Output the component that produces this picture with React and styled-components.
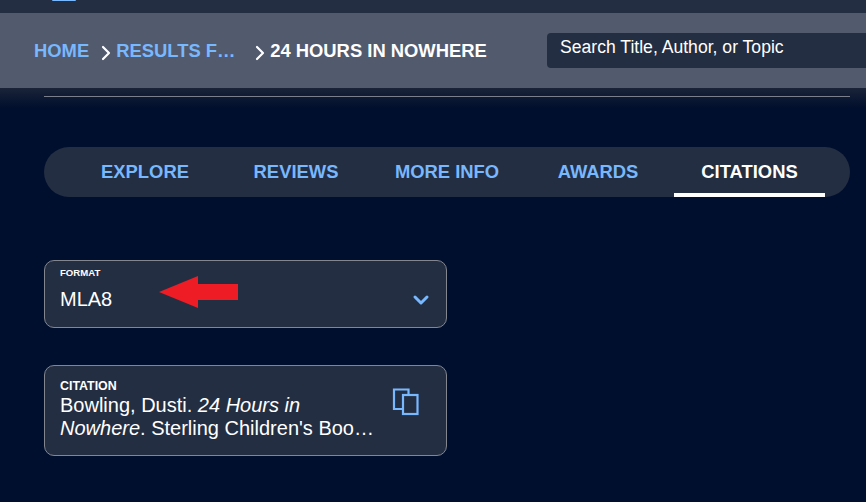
import React from 'react';
import styled, { createGlobalStyle } from 'styled-components';
import { ChevronDown, ChevronRight } from 'lucide-react';

const GlobalStyle = createGlobalStyle`
  html, body {
    margin: 0;
    padding: 0;
    background: #000f2e;
    font-family: "Liberation Sans", Arial, sans-serif;
    overflow: hidden;
  }
`;

const Page = styled.div`
  width: 866px;
  height: 502px;
  overflow: hidden;
  display: flex;
  flex-direction: column;
`;

const TopStrip = styled.div`
  height: 13px;
  background: #242e42;
  padding-left: 52px;
`;

const LogoEdge = styled.div`
  width: 24px;
  height: 1px;
  background: #78b8ff;
  border-radius: 0 0 4px 4px;
`;

const BreadcrumbBar = styled.div`
  height: 75px;
  background: #525a6e;
  display: flex;
  align-items: flex-start;
  padding-left: 34px;
`;

const Trail = styled.nav`
  width: 513px;
  flex: none;
  display: flex;
  align-items: center;
  height: 24px;
  margin-top: 26px;
  font-size: 18.4px;
  font-weight: 700;
`;

const Crumb = styled.span`
  color: ${(p) => (p.$current ? '#ffffff' : '#78b8ff')};
  width: ${(p) => p.$width || 'auto'};
  white-space: nowrap;
  flex: none;
`;

const Separator = styled(ChevronRight)`
  flex: none;
  color: #fff;
  width: 24px;
  height: 24px;
  margin: ${(p) => p.$margin};
`;

const Search = styled.div`
  flex: 1;
  height: 35px;
  margin-top: 20px;
  background: #242e42;
  border-radius: 4px 0 0 4px;
  color: #fff;
  font-size: 17.6px;
  line-height: 20px;
  padding: 4px 0 0 13px;
  box-sizing: border-box;
`;

const Shade = styled.div`
  height: 20px;
  background: linear-gradient(#1a2338, #000f2e);
  padding: 8px 16px 0 44px;
  box-sizing: border-box;
`;

const Rule = styled.div`
  height: 1px;
  background: #7b7f8b;
`;

const Content = styled.main`
  padding: 39px 16px 0 44px;
  display: flex;
  flex-direction: column;
`;

const Tabs = styled.div`
  height: 50px;
  background: #242e42;
  border-radius: 25px;
  padding: 0 24px 0 26px;
  display: flex;
`;

const Tab = styled.div`
  width: 151px;
  box-sizing: border-box;
  text-align: center;
  font-size: 18.4px;
  font-weight: 700;
  line-height: 50px;
  padding-right: ${(p) => (p.$active ? '0' : '1px')};
  color: ${(p) => (p.$active ? '#ffffff' : '#78b8ff')};
  border-bottom: 4px solid ${(p) => (p.$active ? '#ffffff' : 'transparent')};
`;

const Field = styled.div`
  position: relative;
  width: 403px;
  box-sizing: border-box;
  background: #242e42;
  border: 1px solid #83868f;
  border-radius: 10px;
  color: #fff;
  margin-top: ${(p) => p.$top};
  height: ${(p) => p.$height};
  padding: ${(p) => p.$padding};
`;

const FormatLabel = styled.div`
  font-size: 9.6px;
  font-weight: 700;
  line-height: 12px;
`;

const FormatValue = styled.div`
  font-size: 20px;
  line-height: 23px;
  margin-top: 9px;
`;

const Chevron = styled(ChevronDown)`
  position: absolute;
  right: 13px;
  top: 27px;
  width: 24px;
  height: 24px;
  color: #78b8ff;
`;

const Arrow = styled.svg`
  position: absolute;
  left: 114px;
  top: 15px;
  width: 80px;
  height: 33px;
`;

const CitationLabel = styled.div`
  font-size: 12.4px;
  font-weight: 700;
  line-height: 16px;
`;

const CitationText = styled.div`
  width: 320px;
  font-size: 20px;
  line-height: 23px;
`;

const CopyIcon = styled.svg`
  position: absolute;
  right: 26px;
  top: 22px;
  width: 28px;
  height: 28px;
  color: #78b8ff;
`;

export default function App() {
  return (
    <Page>
      <GlobalStyle />
      <TopStrip>
        <LogoEdge />
      </TopStrip>
      <BreadcrumbBar>
        <Trail>
          <Crumb>HOME</Crumb>
          <Separator $margin="4px -1.5px 0 4.5px" strokeWidth={2.2} />
          <Crumb $width="132px">RESULTS F…</Crumb>
          <Separator $margin="4px -2px 0 0" strokeWidth={2.2} />
          <Crumb $current>24 HOURS IN NOWHERE</Crumb>
        </Trail>
        <Search>Search Title, Author, or Topic</Search>
      </BreadcrumbBar>
      <Shade>
        <Rule />
      </Shade>
      <Content>
        <Tabs>
          <Tab>EXPLORE</Tab>
          <Tab>REVIEWS</Tab>
          <Tab>MORE INFO</Tab>
          <Tab>AWARDS</Tab>
          <Tab $active>CITATIONS</Tab>
        </Tabs>
        <Field $top="63px" $height="68px" $padding="6px 15px">
          <FormatLabel>FORMAT</FormatLabel>
          <FormatValue>MLA8</FormatValue>
          <Arrow viewBox="0 0 80 33">
            <polygon points="0,16 39,0 39,8 79,8 79,24 39,24 39,32" fill="#ee1c25" />
          </Arrow>
          <Chevron strokeWidth={3} />
        </Field>
        <Field $top="37px" $height="91px" $padding="12px 15px">
          <CitationLabel>CITATION</CitationLabel>
          <CitationText>
            Bowling, Dusti. <em>24 Hours in Nowhere</em>. Sterling Children's Boo…
          </CitationText>
          <CopyIcon viewBox="0 0 28 28" fill="none" stroke="currentColor" strokeWidth="2.2">
            <path d="M11 21H2V1.5h14.5V7" />
            <rect x="11" y="7" width="14.5" height="19" />
          </CopyIcon>
        </Field>
      </Content>
    </Page>
  );
}
